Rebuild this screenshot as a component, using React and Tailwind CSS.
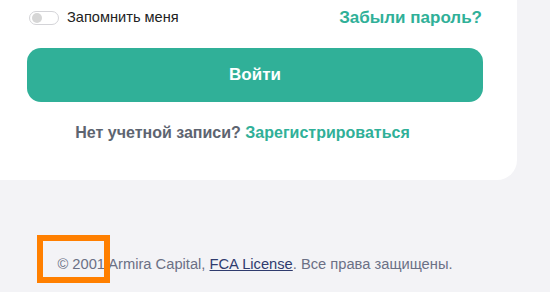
export default function App() {
  return (
    <div className="relative min-h-[292px] w-[550px] overflow-hidden bg-[#f3f3f6]" style={{ fontFamily: '"Liberation Sans", Arial, sans-serif' }}>
      <div className="w-[517px] rounded-br-[20px] bg-white px-[27px] pt-[8px] pb-[37px]">
        <div className="flex h-[20px] items-center justify-between">
          <label className="flex items-center gap-[8px] pl-[2px]">
            <span className="flex h-[14px] w-[30px] items-center rounded-full border border-[#d4d4d8] bg-white px-[2px]">
              <span className="h-[10px] w-[10px] rounded-full bg-[#d6d6d6]" />
            </span>
            <span className="text-[14.6px] text-[#222]">Запомнить меня</span>
          </label>
          <a className="pr-[8px] text-[17px] font-bold text-[#30b098]">Забыли пароль?</a>
        </div>
        <button className="mt-[20px] flex h-[54px] w-[456px] items-center justify-center rounded-[14px] bg-[#30b098] text-[17px] font-bold text-white">
          Войти
        </button>
        <p className="mt-[21px] pr-[32px] text-center text-[16px] font-bold leading-[20px] text-[#5d6470]">
          Нет учетной записи? <span className="text-[#30b098]">Зарегистрироваться</span>
        </p>
      </div>
      <p className="mt-[74px] w-[510px] text-center text-[14.7px] leading-[20px] text-[#6b7085]">
        © 2001 Armira Capital, <a className="text-[#2f3b6e] underline">FCA License</a>. Все права защищены.
      </p>
      <div className="absolute left-[37px] top-[235px] h-[48px] w-[73px] border-[6px] border-[#ff7f00]" />
    </div>
  );
}
